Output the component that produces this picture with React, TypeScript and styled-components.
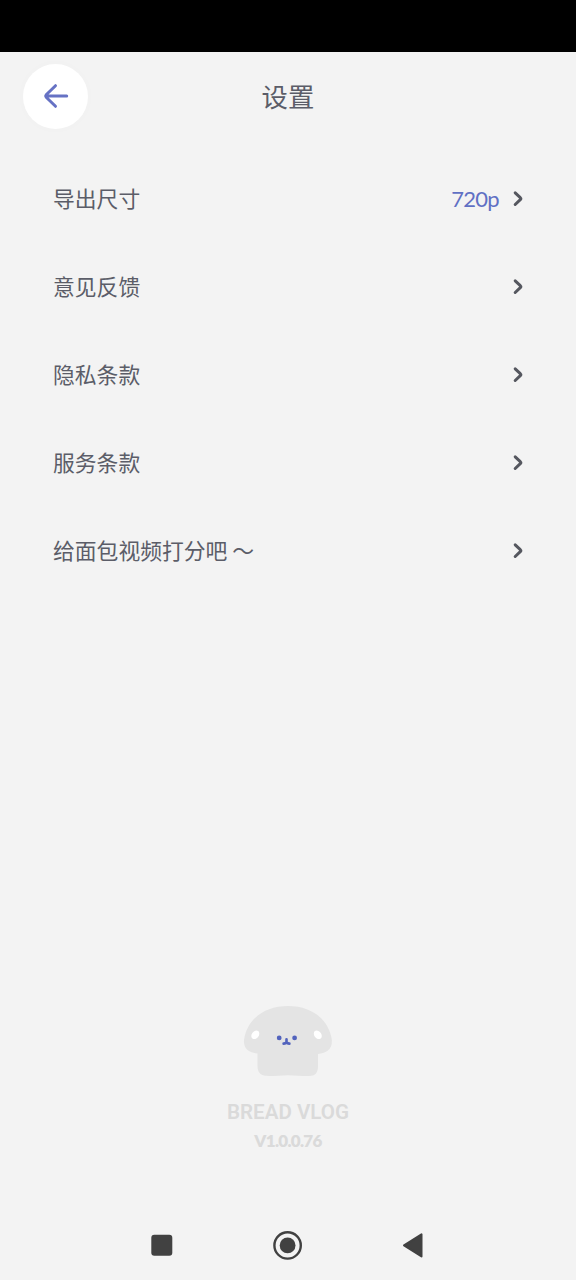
import React from 'react';
import styled, { createGlobalStyle } from 'styled-components';

const GlobalStyle = createGlobalStyle`
  * { box-sizing: border-box; }
  body { margin: 0; background: #f3f3f3; }
`;

const Screen = styled.div`
  display: flex;
  flex-direction: column;
  width: 576px;
  height: 1280px;
  background: #f3f3f3;
  color: #5b5d68;
  font-family: "Noto Sans CJK SC", sans-serif;
  overflow: hidden;
`;

const StatusBar = styled.div`
  height: 52px;
  flex: none;
  background: #000;
`;

const Header = styled.header`
  display: grid;
  grid-template-columns: 65px 1fr 65px;
  align-items: center;
  height: 89px;
  flex: none;
  padding: 0 23px;
`;

const BackButton = styled.button`
  display: flex;
  align-items: center;
  justify-content: center;
  width: 65px;
  height: 65px;
  padding: 0 0 1px;
  border: 0;
  border-radius: 50%;
  background: #fff;
  box-shadow: 0 0 12px rgba(0, 0, 0, 0.015);
`;

const Title = styled.h1`
  margin: 0;
  padding-bottom: 2px;
  text-align: center;
  font-size: 26.4px;
  font-weight: 400;
  line-height: 40px;
`;

const Menu = styled.nav`
  display: flex;
  flex-direction: column;
  padding: 14px 52px 0 53px;
`;

const Row = styled.div`
  display: flex;
  align-items: center;
  height: 88px;
  font-size: 21.8px;
  line-height: 32px;
`;

const Label = styled.span`
  flex: 1;
  padding-bottom: 2px;
  white-space: pre;
`;

const Value = styled.span`
  margin-right: 13px;
  color: #6070c4;
  font-family: Lato, sans-serif;
  font-size: 22px;
  letter-spacing: -0.7px;
  line-height: 32px;
`;

const Brand = styled.footer`
  display: flex;
  flex-direction: column;
  align-items: center;
  margin-top: auto;
  color: #dadada;
`;

const BrandName = styled.div`
  margin-top: 23px;
  font-family: Roboto, sans-serif;
  font-size: 20.6px;
  font-weight: 600;
  line-height: 26px;
`;

const Version = styled.div`
  margin-top: 3px;
  font-family: Lato, sans-serif;
  font-size: 17px;
  font-weight: 800;
  letter-spacing: -0.7px;
  line-height: 26px;
`;

const NavBar = styled.div`
  display: flex;
  align-items: center;
  justify-content: space-between;
  height: 70px;
  flex: none;
  margin-top: 56px;
  padding: 0 152px 0 151px;
`;

const Chevron = () => (
  <svg width="12" height="20" viewBox="0 0 12 20" fill="none">
    <path d="M3.200 3.900 8.300 8.700Q9.300 9.700 8.300 10.700L3.200 15.500" stroke="#55575f" strokeWidth="3" strokeLinecap="round" strokeLinejoin="round" />
  </svg>
);

const Mascot = () => (
  <svg width="90" height="71" viewBox="0 0 90 71">
    <path
      d="M45 1C69 1 85.500 14.500 88.700 34C90 44 84 48 75 49V61C75 68 72 71 66 71C58 71 52 70.200 45 70.200C38 70.200 32 71 26 71C18 71 14.500 68 14.500 61V48.500C6 47.500 .3 44 1 35C4 14.500 21 1 45 1Z"
      fill="#e4e4e4"
    />
    <ellipse cx="12.300" cy="29.800" rx="3.500" ry="4.700" fill="#fff" transform="rotate(38 12.300 29.800)" />
    <ellipse cx="74.800" cy="29.800" rx="3.500" ry="4.700" fill="#fff" transform="rotate(-38 74.800 29.800)" />
    <circle cx="36.200" cy="32.900" r="2.400" fill="#5263bd" />
    <circle cx="51.600" cy="32.900" r="2.400" fill="#5263bd" />
    <path d="M43.500 34.200V37M40.600 38.600Q43 38.500 43.500 36.800Q44 38.500 46.400 38.600" fill="none" stroke="#5263bd" strokeWidth="2.600" strokeLinecap="round" strokeLinejoin="round" />
  </svg>
);

const items: { label: string; value?: string }[] = [
  { label: '导出尺寸', value: '720p' },
  { label: '意见反馈' },
  { label: '隐私条款' },
  { label: '服务条款' },
  { label: '给面包视频打分吧 ～' },
];

export default function App() {
  return (
    <Screen>
      <GlobalStyle />
      <StatusBar />
      <Header>
        <BackButton aria-label="返回">
          <svg width="28" height="28" viewBox="0 0 28 28" fill="none">
            <path d="M13.500 3.700 4.200 12.800Q3.200 14 4.200 15.200L13.500 24.300M4 14H24.700" stroke="#6672c4" strokeWidth="3" strokeLinecap="round" strokeLinejoin="round" />
          </svg>
        </BackButton>
        <Title>设置</Title>
      </Header>
      <Menu>
        {items.map(({ label, value }) => (
          <Row key={label}>
            <Label>{label}</Label>
            {value && <Value>{value}</Value>}
            <Chevron />
          </Row>
        ))}
      </Menu>
      <Brand>
        <Mascot />
        <BrandName>BREAD VLOG</BrandName>
        <Version>V1.0.0.76</Version>
      </Brand>
      <NavBar>
        <svg width="22" height="22" viewBox="0 0 22 22">
          <rect x=".3" y=".8" width="21" height="21" rx="3" fill="#414141" />
        </svg>
        <svg width="30" height="30" viewBox="0 0 30 30">
          <circle cx="14.600" cy="15.400" r="13.200" fill="none" stroke="#414141" strokeWidth="2.400" />
          <circle cx="14.600" cy="15.400" r="7.900" fill="#414141" />
        </svg>
        <svg width="22" height="26" viewBox="0 0 22 26">
          <path d="M19.500 2.400V24.400L2 13.400Z" fill="#414141" stroke="#414141" strokeWidth="2" strokeLinejoin="round" />
        </svg>
      </NavBar>
    </Screen>
  );
}
